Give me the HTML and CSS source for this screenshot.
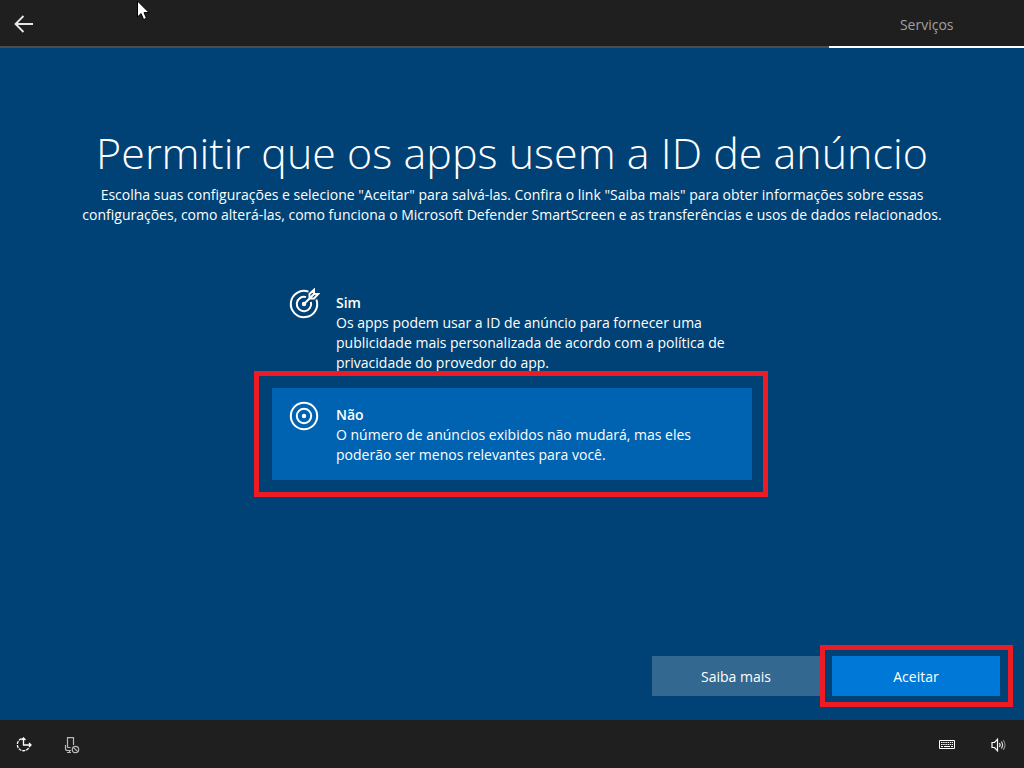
FILE: index.html
```html
<!DOCTYPE html>
<html lang="pt-BR">
<head>
<meta charset="utf-8">
<meta name="viewport" content="width=device-width, initial-scale=1">
<title>Permitir que os apps usem a ID de anúncio</title>
<link rel="stylesheet" href="styles.css">
</head>
<body>
<header class="topbar">
  <button class="icon-button back" type="button" aria-label="Voltar">
    <svg width="20" height="18" viewBox="0 0 20 18" fill="none" stroke="#e6e6e6" stroke-width="1.8"><path d="M19 9H2M9.500 1L1.500 9l8 8"/></svg>
  </button>
  <div class="stage">Serviços</div>
</header>
<svg class="cursor" width="14" height="21" viewBox="0 0 14 21" aria-hidden="true"><path d="M1.500 1v16l3.600-3.400 2.500 5.900 2.900-1.200-2.500-5.700h5z" fill="#fff" stroke="#000"/></svg>

<main class="page">
  <section class="intro">
    <h1 class="title">Permitir que os apps usem a ID de anúncio</h1>
    <p class="lead">Escolha suas configurações e selecione "Aceitar" para salvá-las. Confira o link "Saiba mais" para obter informações sobre essas<br>configurações, como alterá-las, como funciona o Microsoft Defender SmartScreen e as transferências e usos de dados relacionados.</p>
  </section>

  <form class="form">
    <div class="options" role="radiogroup" aria-label="ID de anúncio">
      <label class="option">
        <input class="option-input" type="radio" name="adid" value="sim">
        <svg class="option-icon" width="32" height="32" viewBox="0 0 32 32" fill="none" stroke="#fff" stroke-width="2"><path d="M20.500 3.600A13.200 13.200 0 1 0 28.400 11.500"/><path d="M18 9.100A7.200 7.200 0 1 0 22.900 14"/><circle cx="16" cy="16" r="2.200" fill="#fff" stroke="none"/><path d="M16 16L26 6"/><path d="M21.500 10.500V6L26 1.800V6h4.200L26 10.500z"/></svg>
        <span class="option-text"><strong class="option-name">Sim</strong>Os apps podem usar a ID de anúncio para fornecer uma<br>publicidade mais personalizada de acordo com a política de<br>privacidade do provedor do app.</span>
      </label>
      <div class="marked">
        <label class="option selected">
          <input class="option-input" type="radio" name="adid" value="nao" checked>
          <svg class="option-icon" width="32" height="32" viewBox="0 0 32 32" fill="none" stroke="#fff" stroke-width="2"><circle cx="16" cy="16" r="13.200"/><circle cx="16" cy="16" r="7.200"/><circle cx="16" cy="16" r="2.200" fill="#fff" stroke="none"/></svg>
          <span class="option-text"><strong class="option-name">Não</strong>O número de anúncios exibidos não mudará, mas eles<br>poderão ser menos relevantes para você.</span>
        </label>
        <span class="highlight highlight-option"></span>
      </div>
    </div>
    <div class="actions">
      <button class="button" type="button">Saiba mais</button>
      <div class="marked">
        <button class="button primary" type="button">Aceitar</button>
        <span class="highlight highlight-button"></span>
      </div>
    </div>
  </form>
</main>

<footer class="bottombar">
  <div class="tools">
    <button class="icon-button" type="button" aria-label="Facilidade de acesso">
      <svg width="18" height="18" viewBox="0 0 18 18" fill="none" stroke="#fff" stroke-width="1.300"><path d="M6.500 2.700A6.200 6.200 0 1 0 14 11.500" stroke-dasharray="3 1"/><path d="M8.500 2v7H16M6.500 4l2-2 2 2M14 7l2 2-2 2"/></svg>
    </button>
    <button class="icon-button" type="button" aria-label="Microfone desativado">
      <svg width="18" height="18" viewBox="0 0 18 18" fill="none" stroke="#b8b8b8" stroke-width="1.200"><path d="M4.500 11.500V1.600h6V9M4.500 11.500h3M2.500 9v3.500q0 2 2 2H8M6.500 14.500V17M4 16.500h4"/><circle cx="12.500" cy="13.500" r="3.200"/><path d="M10.300 11.300l4.400 4.400"/></svg>
    </button>
  </div>
  <div class="tools">
    <button class="icon-button" type="button" aria-label="Teclado">
      <svg width="18" height="18" viewBox="0 0 18 18" fill="none" stroke="#fff"><path d="M1.500 4.500h15v8h-15z"/><path d="M3 6.500h12M3 8.500h12" stroke-dasharray="1.500 .7"/><path d="M3 10.500h2M6 10.500h6M13 10.500h2"/></svg>
    </button>
    <button class="icon-button" type="button" aria-label="Volume">
      <svg width="18" height="18" viewBox="0 0 18 18" fill="none" stroke="#fff" stroke-width="1.200"><path d="M2 6.500h2.500L7.500 3.200v11.600L4.500 11.500H2z"/><path d="M9.500 7q1.400 2 0 4"/><path d="M11.300 5.500q2.600 3.500 0 7" stroke="#ddd"/><path d="M13.200 4q3.600 5 0 10" stroke="#888"/></svg>
    </button>
  </div>
</footer>
</body>
</html>
```
FILE: styles.css
```css
* { box-sizing: border-box; }

body {
  margin: 0;
  min-height: 100vh;
  display: flex;
  flex-direction: column;
  background: #004275;
  color: #fff;
  font: 14px/20px "Open Sans", "Noto Sans", sans-serif;
}

button { font: inherit; color: inherit; border: 0; padding: 0; }

.topbar {
  display: flex;
  align-items: stretch;
  justify-content: space-between;
  height: 48px;
  background: #1f1f1f;
  box-shadow: inset 0 -2px #4c4c4c;
}

.icon-button {
  display: flex;
  align-items: center;
  justify-content: center;
  width: 48px;
  height: 48px;
  background: none;
}

.stage {
  display: flex;
  align-items: center;
  justify-content: center;
  width: 19%;
  padding-top: 4px;
  border-bottom: 2px solid #fff;
  color: #a0a0a0;
}

.cursor { position: absolute; left: 136px; top: 0; }

.page {
  flex: 1;
  display: flex;
  flex-direction: column;
  padding: 72px 24px 24px;
}

.intro { text-align: center; }

.title {
  margin: 0;
  font-size: 43px;
  font-weight: 300;
  line-height: 65px;
}

.lead { margin: 0; }

.form {
  flex: 1;
  display: flex;
  flex-direction: column;
  justify-content: space-between;
  padding-top: 51px;
}

.options {
  width: 100%;
  max-width: 480px;
  margin: 0 auto;
}

.option {
  display: flex;
  align-items: flex-start;
  gap: 16px;
  padding: 17px 16px 15px;
}

.selected { background: #0063b1; }

.option-input {
  position: absolute;
  opacity: 0;
  margin: 0;
}

.option-icon { flex: none; margin-top: -5px; }

.option-name { display: block; font-weight: 600; }

.marked { position: relative; }

.highlight {
  position: absolute;
  border: 5px solid #ed1c24;
  pointer-events: none;
}

.highlight-option { inset: -17px -16px -17px -18px; }

.highlight-button { inset: -11px -13px -11px -12px; }

.actions {
  display: flex;
  justify-content: flex-end;
  gap: 12px;
}

.button {
  width: 168px;
  height: 40px;
  padding-top: 2px;
  background: #336890;
}

.primary { background: #0078d7; }

.bottombar {
  display: flex;
  justify-content: space-between;
  height: 48px;
  padding: 1px 1px 0 0;
  background: #1f1f1f;
}

.tools { display: flex; }

.tools:last-child { gap: 4px; }
```
